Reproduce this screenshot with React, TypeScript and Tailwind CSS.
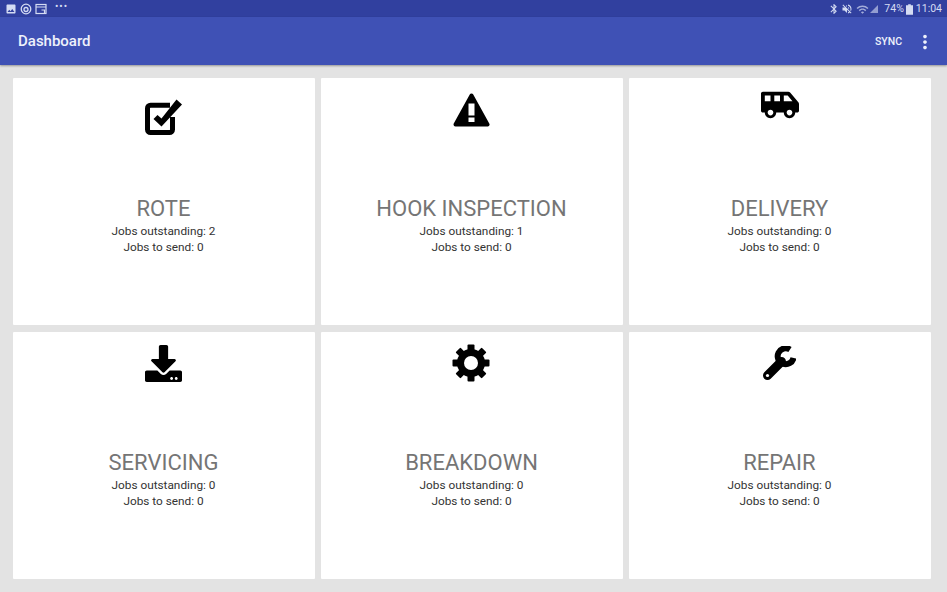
import { FaDownload, FaShuttleVan } from 'react-icons/fa';
import { MdBluetooth, MdImage, MdMoreVert, MdVolumeOff, MdWifi } from 'react-icons/md';

type IconProps = { className?: string };

function CheckIcon({ className }: IconProps) {
  return (
    <svg viewBox="0 0 38 38" className={className} fill="none">
      <path d="M25 6.2H5.5A3 3 0 0 0 2.5 9.2V30.5A3 3 0 0 0 5.5 33.5H24.5A3 3 0 0 0 27.5 30.5V18" stroke="currentColor" strokeWidth="5" />
      <path d="M31.5 0.5L37 5.5L16.5 27.5L8.5 20L12.5 16L16.5 19.5Z" fill="currentColor" />
    </svg>
  );
}

function WarningIcon({ className }: IconProps) {
  return (
    <svg viewBox="0 0 37 36" className={className}>
      <path d="M18.5 3.5L34.5 32.5H2.5Z" fill="currentColor" stroke="currentColor" strokeWidth="4" strokeLinejoin="round" />
      <rect x="15.5" y="11.5" width="6" height="12" fill="#fff" />
      <rect x="15.5" y="25.5" width="6" height="4.5" fill="#fff" />
    </svg>
  );
}

function GearIcon({ className }: IconProps) {
  return (
    <svg viewBox="0 0 38 38" className={className}>
      <circle cx="19" cy="19" r="14" fill="currentColor" />
      {[0, 45, 90, 135, 180, 225, 270, 315].map((deg) => (
        <rect key={deg} x="15.5" y="0.5" width="7" height="8" rx="1" fill="currentColor" transform={`rotate(${deg} 19 19)`} />
      ))}
      <circle cx="19" cy="19" r="7" fill="#fff" />
    </svg>
  );
}

function WrenchIcon({ className }: IconProps) {
  return (
    <svg viewBox="0 0 34 35" className={className} fill="none">
      <path d="M5.5 29.5L19.5 15.5" stroke="currentColor" strokeWidth="9" strokeLinecap="round" />
      <path d="M28 3.5A8 8 0 1 0 31.5 12" stroke="currentColor" strokeWidth="6" />
      <circle cx="5.5" cy="29.5" r="1.6" fill="#fff" />
    </svg>
  );
}

const cards = [
  { title: 'ROTE', outstanding: 2, Icon: CheckIcon, size: 'h-[38px] w-[38px]', top: 'pt-[21px]' },
  { title: 'HOOK INSPECTION', outstanding: 1, Icon: WarningIcon, size: 'h-[36px] w-[37px]', top: 'pt-[14px] pr-[1px]' },
  { title: 'DELIVERY', outstanding: 0, Icon: FaShuttleVan, size: 'h-[38px] w-[38px]', top: 'pt-[8px]' },
  { title: 'SERVICING', outstanding: 0, Icon: FaDownload, size: 'h-[37px] w-[37px]', top: 'pt-[13px] pr-[1px]' },
  { title: 'BREAKDOWN', outstanding: 0, Icon: GearIcon, size: 'h-[38px] w-[38px]', top: 'pt-[12px] pr-[1px]' },
  { title: 'REPAIR', outstanding: 0, Icon: WrenchIcon, size: 'h-[35px] w-[34px]', top: 'pt-[14px] pr-[1px]' },
];

export default function App() {
  return (
    <div className="flex h-[592px] w-[947px] flex-col overflow-hidden bg-[#e3e3e3] font-['Roboto',sans-serif]">
      {/* Status bar */}
      <div className="flex h-[17px] items-center justify-between bg-[#31409f] pl-[5px] pr-[5px] text-[#d5dcf3]">
        <div className="flex items-center gap-[3px]">
          <MdImage className="h-[12px] w-[12px]" />
          <svg viewBox="0 0 12 12" className="h-[12px] w-[12px]" fill="none" stroke="currentColor" strokeWidth="1.3">
            <circle cx="6" cy="6" r="4.8" />
            <circle cx="6" cy="6.5" r="2" />
          </svg>
          <svg viewBox="0 0 12 12" className="h-[12px] w-[12px]" fill="none" stroke="currentColor" strokeWidth="1.2">
            <rect x="1" y="1.5" width="10" height="9" />
            <path d="M1 4h10M6.5 7h3v3" />
          </svg>
          <span className="mb-[4px] ml-[5px] text-[10px] leading-none tracking-[1px]">•••</span>
        </div>
        <div className="flex items-center pt-[1px] text-[10.5px] leading-none">
          <MdBluetooth className="h-[12px] w-[12px]" />
          <MdVolumeOff className="ml-[1px] h-[12px] w-[12px]" />
          <MdWifi className="ml-[3px] h-[13px] w-[13px] opacity-70" />
          <svg viewBox="0 0 10 10" className="h-[10px] w-[10px]" fill="currentColor">
            <path d="M9 1v8H1z" opacity="0.6" />
          </svg>
          <span className="ml-[5px]">74%</span>
          <svg viewBox="0 0 8 12" className="ml-[2px] h-[11px] w-[7px]" fill="currentColor">
            <path d="M2.5 0h3v1.2H8V12H0V1.2h2.5z" />
          </svg>
          <span className="ml-[3px]">11:04</span>
        </div>
      </div>

      {/* App bar */}
      <div className="flex h-[48px] items-center justify-between bg-[#3f51b5] pl-[18px] pr-[11px] pt-[1px] shadow-[0_1px_2px_rgba(0,0,0,0.35)]">
        <h1 className="text-[15px] font-medium text-[#eef1fb]">Dashboard</h1>
        <div className="flex items-center gap-[12px]">
          <span className="text-[10.5px] font-medium text-[#eef1fb]">SYNC</span>
          <MdMoreVert className="h-[22px] w-[22px] text-[#eef1fb]" />
        </div>
      </div>

      {/* Cards */}
      <div className="grid grid-cols-[302px_302px_302px] grid-rows-[247px_247px] gap-x-[6px] gap-y-[7px] pl-[13px] pt-[13px]">
        {cards.map(({ title, outstanding, Icon, size, top }) => (
          <div key={title} className="flex flex-col items-center rounded-[1px] bg-white pr-[1px]">
            <div className={`flex h-[110px] w-full justify-center ${top}`}>
              <Icon className={`${size} text-black`} />
            </div>
            <h2 className="mt-[7px] text-[22px] leading-[28px] text-[#757575]">{title}</h2>
            <p className="text-[11.8px] leading-[16px] text-[#333]">Jobs outstanding: {outstanding}</p>
            <p className="text-[11.8px] leading-[16px] text-[#333]">Jobs to send: 0</p>
          </div>
        ))}
      </div>
    </div>
  );
}
